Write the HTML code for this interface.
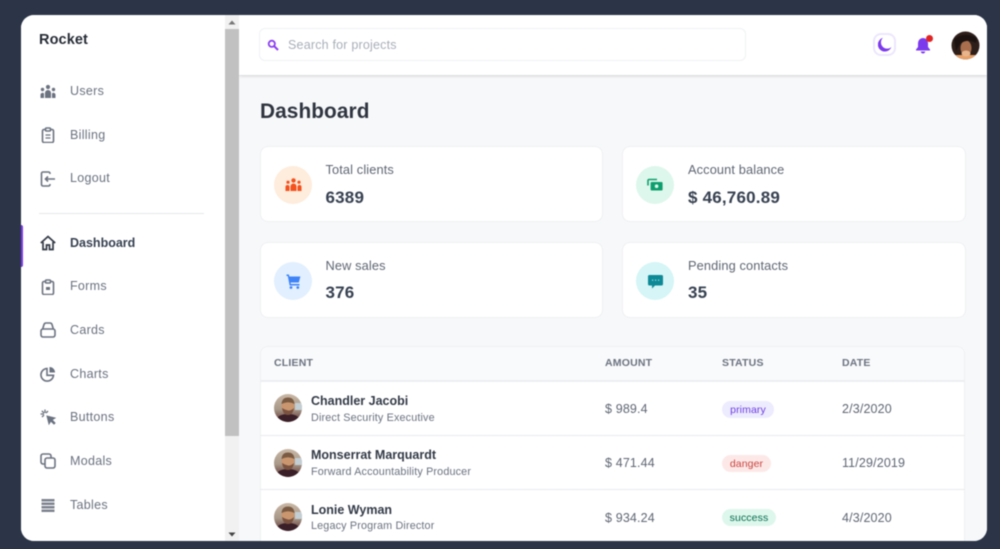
<!DOCTYPE html>
<html lang="en"><head><meta charset="utf-8"><title>Rocket Dashboard</title>
<style>
*{box-sizing:border-box}
html,body{margin:0;padding:0;width:1000px;height:549px;overflow:hidden;background:#2b3547;font-family:"Liberation Sans",sans-serif}
#frame{position:absolute;left:21px;top:15px;width:966px;height:526px;border-radius:13px;background:#fff;overflow:hidden;filter:blur(.6px)}
.a{position:absolute;white-space:nowrap}
.nav{left:49px;font-size:12.5px;color:#6b7280;line-height:16px;letter-spacing:.3px}
.ic{position:absolute;left:19px;width:16px;height:16px;fill:none;stroke:#6b7280;stroke-width:1.6}
.card{position:absolute;width:343px;height:76px;background:#fff;border:1px solid #eef0f3;border-radius:8px}
.circ{position:absolute;left:13px;top:19px;width:38px;height:38px;border-radius:50%}
.lab{position:absolute;left:64.5px;top:15px;font-size:12.8px;line-height:16px;color:#5f6673;letter-spacing:.12px;white-space:nowrap}
.val{position:absolute;left:64.5px;top:41px;font-size:17px;line-height:20px;font-weight:bold;color:#374151;letter-spacing:.2px;white-space:nowrap}
.th{font-size:10.5px;font-weight:bold;color:#6b7280;letter-spacing:.2px;line-height:12px;top:342px}
.name{left:290px;font-size:12.5px;font-weight:bold;color:#333a47;line-height:15px}
.sub{left:290px;font-size:10.8px;color:#6b7280;line-height:13px;letter-spacing:.15px}
.cell{font-size:12.5px;color:#5f6673;line-height:16px;letter-spacing:.15px}
.badge{height:17px;border-radius:9px;font-size:10.5px;line-height:18px;text-align:center;letter-spacing:.1px}
.hr{position:absolute;left:239px;width:705px;height:1px;background:#e9ebee}
.av{position:absolute;left:253px;width:28px;height:28px}
</style></head><body>
<div id="frame">
<div class="a" style="left:218px;top:0;width:748px;height:526px;background:#f7f8fa"></div>
<div class="a" style="left:218px;top:0;width:748px;height:60px;background:#fff;box-shadow:0 1px 3px rgba(0,0,0,.16)"></div>
<div class="a" style="left:238px;top:13px;width:487px;height:33px;background:#fff;border:1px solid #f0f1f4;border-radius:6px"></div>
<svg class="a" style="left:246px;top:24px" width="12" height="12" viewBox="0 0 12 12"><circle cx="4.8" cy="4.8" r="3.1" fill="none" stroke="#8b3ff0" stroke-width="1.8"/><path d="M7.2 7.2L11 11" stroke="#8b3ff0" stroke-width="2"/></svg>
<div class="a" style="left:267px;top:22px;font-size:12.5px;line-height:16px;color:#a9afb9;letter-spacing:.2px">Search for projects</div>
<div class="a" style="left:852px;top:18px;width:23px;height:23px;border-radius:8px;background:#fff;border:2px solid #ece6fd"></div>
<svg class="a" style="left:857px;top:22px" width="14" height="15" viewBox="0 0 14 15"><path d="M5 .8A7 7 0 1 0 13.4 10 6.2 6.2 0 0 1 5 .8Z" fill="#7c3aed"/></svg>
<svg class="a" style="left:894px;top:22px" width="16" height="17" viewBox="0 0 16 17"><path d="M8 1a5 5 0 0 0-5 5v4L1 12.5v1h14v-1L13 10V6a5 5 0 0 0-5-5Z" fill="#7c3aed"/><path d="M5.8 14.5a2.2 2 0 0 0 4.4 0Z" fill="#7c3aed"/></svg>
<div class="a" style="left:905px;top:20px;width:7px;height:7px;border-radius:50%;background:#e02424"></div>
<svg class="a" style="left:930px;top:16px" width="29" height="29" viewBox="0 0 29 29"><defs><clipPath id="c0"><circle cx="14.5" cy="14.5" r="14"/></clipPath></defs><g clip-path="url(#c0)"><rect width="29" height="29" fill="#2e1f1a"/><rect y="24" width="29" height="5" fill="#e8a066"/><ellipse cx="15" cy="17" rx="5.5" ry="7.5" fill="#a86e4e"/><ellipse cx="15" cy="22.5" rx="4.5" ry="3" fill="#e8b48c"/><path d="M3 8Q14 0 26 7L25 12Q16 7 9 13L5 20Z" fill="#1c1310"/></g></svg>
<div class="a" style="left:239px;top:84px;font-size:20.8px;line-height:26px;font-weight:bold;color:#2f3540;letter-spacing:.1px">Dashboard</div>
<div class="card" style="left:239px;top:131px"><div class="circ" style="background:#feecdc"></div>
<svg class="a" style="left:24px;top:31px" width="17" height="14" viewBox="0 0 17 14" fill="#f4511e"><circle cx="8.5" cy="2.4" r="2.2"/><circle cx="3" cy="4.2" r="1.6"/><circle cx="14" cy="4.2" r="1.6"/><path d="M5.500 13V8.500a3 3 0 0 1 6 0V13Z"/><path d="M.5 13V9a2 2 0 0 1 4 0v4ZM12.500 13V9a2 2 0 0 1 4 0v4Z"/></svg>
<div class="lab">Total clients</div><div class="val">6389</div></div>
<div class="card" style="left:601px;top:131px;width:344px"><div class="circ" style="background:#def7ec"></div>
<svg class="a" style="left:24px;top:31px" width="16" height="14" viewBox="0 0 16 14"><path d="M1 7.500V2.500a1 1 0 0 1 1-1h8" fill="none" stroke="#0e9f6e" stroke-width="1.600"/><rect x="3.600" y="4" width="12" height="8.500" rx="1" fill="#0e9f6e"/><circle cx="9.600" cy="8.200" r="1.800" fill="#def7ec"/></svg>
<div class="lab" style="left:65px">Account balance</div><div class="val" style="left:65px">$ 46,760.89</div></div>
<div class="card" style="left:239px;top:227px"><div class="circ" style="background:#e1effe"></div>
<svg class="a" style="left:25px;top:31px" width="15" height="15" viewBox="0 0 15 15" fill="#3f83f8"><path d="M.5 .5h2.400l.5 2h11l-1.600 6H4.600l.3 1.500h8.600v1.500H3.600L1.800 2H.5Z"/><circle cx="5" cy="13.500" r="1.400"/><circle cx="11.800" cy="13.500" r="1.400"/></svg>
<div class="lab">New sales</div><div class="val" style="top:40px">376</div></div>
<div class="card" style="left:601px;top:227px;width:344px"><div class="circ" style="background:#d5f5f6"></div>
<svg class="a" style="left:25px;top:32px" width="15" height="14" viewBox="0 0 15 14"><path d="M1.500 0h12A1.500 1.500 0 0 1 15 1.500v7.500A1.500 1.500 0 0 1 13.500 10.500H7L4 13.500v-3H1.500A1.500 1.500 0 0 1 0 9V1.500A1.500 1.500 0 0 1 1.500 0Z" fill="#0e8a97"/><path d="M4 5.200h1.200M7 5.200h1.200M10 5.200h1.200" stroke="#a8e5e8" stroke-width="1.100"/></svg>
<div class="lab" style="left:65px">Pending contacts</div><div class="val" style="top:40px;left:65px">35</div></div>
<div class="a" style="left:239px;top:331px;width:705px;height:200px;background:#fff;border:1px solid #eef0f3;border-radius:8px 8px 0 0"></div>
<div class="a" style="left:240px;top:332px;width:703px;height:34px;background:#f9fafb;border-radius:8px 8px 0 0"></div>
<div class="hr" style="top:365px;height:2px;background:#eceef1"></div>
<div class="hr" style="top:420px"></div>
<div class="hr" style="top:474px"></div>
<div class="a th" style="left:253px">CLIENT</div>
<div class="a th" style="left:584px">AMOUNT</div>
<div class="a th" style="left:701px">STATUS</div>
<div class="a th" style="left:821px">DATE</div>
<svg width="0" height="0" style="position:absolute"><defs><clipPath id="ca"><circle cx="14" cy="14" r="14"/></clipPath>
<linearGradient id="gb" x1="0" y1="0" x2="0" y2="1"><stop offset="0" stop-color="#c9b8a6"/><stop offset=".55" stop-color="#a89888"/><stop offset="1" stop-color="#5a2e30"/></linearGradient>
<symbol id="man" viewBox="0 0 28 28"><g clip-path="url(#ca)"><rect width="28" height="28" fill="url(#gb)"/><rect x="21" y="9" width="7" height="7" fill="#c3ced4"/><path d="M1 28Q3 20 14 20T27 28Z" fill="#3a1f28"/><ellipse cx="14" cy="12.500" rx="6.500" ry="8" fill="#c9966f"/><path d="M7.500 10Q8 3.500 14 3.500T20.500 10Q14 6.500 7.500 10Z" fill="#7a5a42"/><path d="M8 14Q9 21 14 21T20 14Q17 17 14 16.500T8 14Z" fill="#7a5240"/></g></symbol></defs></svg>
<svg class="av" style="top:379px"><use href="#man"/></svg>
<svg class="av" style="top:434px"><use href="#man"/></svg>
<svg class="av" style="top:488px"><use href="#man"/></svg>
<div class="a name" style="top:379px">Chandler Jacobi</div>
<div class="a sub" style="top:397px">Direct Security Executive</div>
<div class="a name" style="top:433px">Monserrat Marquardt</div>
<div class="a sub" style="top:451px">Forward Accountability Producer</div>
<div class="a name" style="top:488px">Lonie Wyman</div>
<div class="a sub" style="top:505px">Legacy Program Director</div>
<div class="a cell" style="left:584px;top:386px">$ 989.4</div>
<div class="a cell" style="left:584px;top:440px">$ 471.44</div>
<div class="a cell" style="left:584px;top:495px">$ 934.24</div>
<div class="a badge" style="left:701px;top:386px;width:52px;background:#edebfe;color:#6d3fe0">primary</div>
<div class="a badge" style="left:701px;top:440px;width:49px;background:#fde8e8;color:#c8453f">danger</div>
<div class="a badge" style="left:701px;top:494px;width:54px;background:#def7ec;color:#046c4e">success</div>
<div class="a cell" style="left:821px;top:386px">2/3/2020</div>
<div class="a cell" style="left:821px;top:440px">11/29/2019</div>
<div class="a cell" style="left:821px;top:495px">4/3/2020</div>
<div class="a" style="left:0;top:0;width:204px;height:526px;background:#fff"></div>
<div class="a" style="left:18px;top:16px;font-size:14.5px;line-height:18px;font-weight:bold;color:#262c36;letter-spacing:.1px">Rocket</div>
<svg class="ic" style="top:69px" viewBox="0 0 16 16"><g fill="#6b7280" stroke="none"><circle cx="8" cy="3" r="2.100"/><circle cx="2.500" cy="5.500" r="1.700"/><circle cx="13.500" cy="5.500" r="1.700"/><path d="M5 14V9a3 3 0 0 1 6 0v5ZM.5 14v-3.500a2 2 0 0 1 3.500-1V14ZM12 14V9.500a2 2 0 0 1 3.500 1V14Z"/></g></svg>
<div class="a nav" style="top:68px">Users</div>
<svg class="ic" style="top:112px" viewBox="0 0 16 16"><rect x="2.500" y="2.500" width="11" height="13" rx="1.500"/><rect x="5.500" y="1" width="5" height="3" rx="1" fill="#fff"/><path d="M5.500 8h5M5.500 11h5" stroke-width="1.300"/></svg>
<div class="a nav" style="top:112px">Billing</div>
<svg class="ic" style="top:156px" viewBox="0 0 16 16"><path d="M10 3V2.500A1.500 1.500 0 0 0 8.500 1H3A1.500 1.500 0 0 0 1.500 2.500v11A1.500 1.500 0 0 0 3 15h5.500a1.500 1.500 0 0 0 1.500-1.500V13"/><path d="M15 8H5.500M8 5.500L5.500 8 8 10.500"/></svg>
<div class="a nav" style="top:155px">Logout</div>
<div class="a" style="left:18px;top:198px;width:165px;height:1px;background:#e5e7eb"></div>
<div class="a" style="left:0;top:210px;width:2px;height:42px;background:#7c3aed;border-radius:0 2px 2px 0"></div>
<svg class="ic" style="top:220px;stroke:#333a47" viewBox="0 0 16 16"><path d="M.8 8L8 1.500 15.200 8" stroke-width="1.700"/><path d="M3 7v7.500h3.500V10h3v4.500H13V7" stroke-width="1.700"/></svg>
<div class="a nav" style="top:220px;color:#374151;font-weight:bold;letter-spacing:0">Dashboard</div>
<svg class="ic" style="top:264px" viewBox="0 0 16 16"><rect x="2.500" y="2.500" width="11" height="13" rx="1.500"/><rect x="5.500" y="1" width="5" height="3" rx="1" fill="#fff"/><path d="M6 9.500h4" stroke-width="3"/></svg>
<div class="a nav" style="top:263px">Forms</div>
<svg class="ic" style="top:307px" viewBox="0 0 16 16"><rect x="1" y="7" width="14" height="8" rx="2"/><path d="M2.500 7.500L4 2.500a2.200 2.200 0 0 1 2-1.500h4a2.200 2.200 0 0 1 2 1.500L13.500 7.500"/></svg>
<div class="a nav" style="top:307px">Cards</div>
<svg class="ic" style="top:351px" viewBox="0 0 16 16"><path d="M7 2.500a6.300 6.300 0 1 0 6.500 6.800H7Z"/><path d="M9.500 1a5.500 5.500 0 0 1 5.500 5.500H9.500Z" fill="#6b7280" stroke="none"/></svg>
<div class="a nav" style="top:351px">Charts</div>
<svg class="ic" style="top:394px" viewBox="0 0 16 16"><path d="M7 7l2 8 1.800-3 3.200 3 1-1-3-3.200 3-1.800Z" fill="#6b7280" stroke-width="1"/><path d="M5 0.500v3.500M0.500 5H4M1.800 1.800L4 4M8 2L6 4M2 8l2-2" stroke-width="1.300"/></svg>
<div class="a nav" style="top:394px">Buttons</div>
<svg class="ic" style="top:438px" viewBox="0 0 16 16"><rect x="1" y="1" width="10" height="10" rx="2"/><rect x="5" y="5" width="10" height="10" rx="2" fill="#fff"/></svg>
<div class="a nav" style="top:438px">Modals</div>
<svg class="ic" style="top:482px" viewBox="0 0 16 16"><path d="M1.500 2h13v2.500h-13ZM1.500 5.500h13v2.500h-13ZM1.500 9h13v2.500h-13ZM1.500 12.500h13v2.500h-13Z" fill="#7d838f" stroke="none"/></svg>
<div class="a nav" style="top:482px">Tables</div>
<div class="a" style="left:204px;top:0;width:14px;height:526px;background:#f1f1f1"></div>
<div class="a" style="left:204px;top:14px;width:14px;height:407px;background:#c1c1c1"></div>
<svg class="a" style="left:207px;top:5px" width="8" height="5"><path d="M4 0.500L7.500 4.500H.5Z" fill="#777"/></svg>
<svg class="a" style="left:207px;top:517px" width="8" height="5"><path d="M4 4.500L7.500 .5H.5Z" fill="#444"/></svg>
</div>
</body></html>
